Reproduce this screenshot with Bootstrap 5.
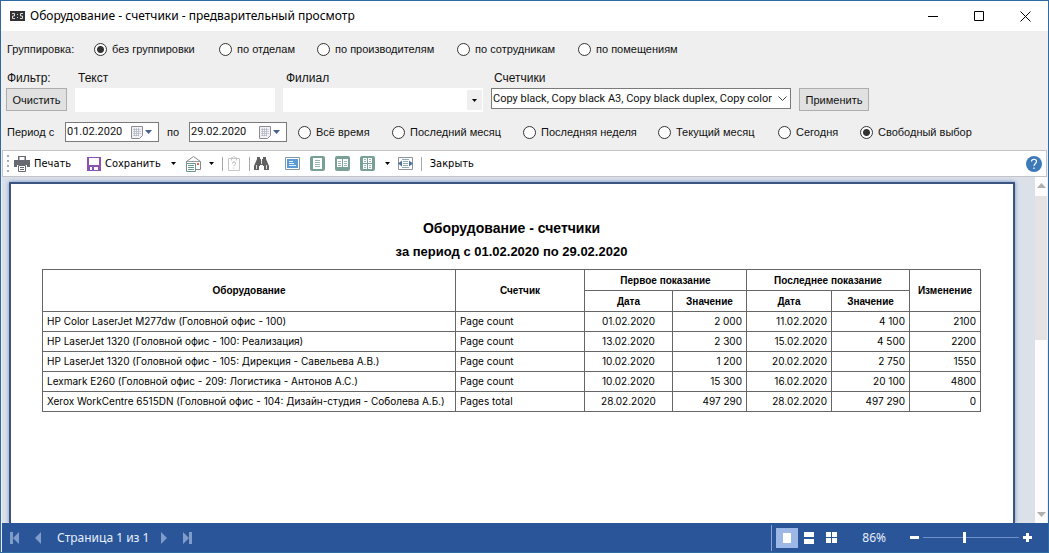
<!DOCTYPE html>
<html lang="ru">
<head>
<meta charset="utf-8">
<meta name="viewport" content="width=device-width, initial-scale=1">
<title>Оборудование - счетчики - предварительный просмотр</title>
<link rel="stylesheet" href="https://cdn.jsdelivr.net/npm/bootstrap@5.3.0/dist/css/bootstrap.min.css">
<style>
body { font-family: "Liberation Sans", Arial, sans-serif; font-size: 11px; line-height: 16px; color: #111; background: #efefef; }
svg { display: block; flex-shrink: 0; }
.app-window { border: 1px solid #2f6aa3; }
.titlebar { height: 30px; padding-left: 8px; background: #fff; font: 12px/18px "Noto Sans", sans-serif; color: #000; }
.win-btn { width: 46px; height: 30px; padding: 0; border: 0; background: none; color: #000; }
.form-area { padding: 0 4px 0 5px; height: 119px; }
.pick-grid { display: grid; align-items: center; height: 36px; padding-left: 1px; }
.pick-group { grid-template-columns: 87px 125px 98px 140px 121px 140px; }
.pick-period { grid-template-columns: 58px 94px 30px 98px 11px 94px 131px 135px 120px 82px 120px; height: 40px; }
.filter-grid { display: grid; grid-template-columns: 61px 200px 200px 300px 70px; column-gap: 8px; align-items: start; }
.filter-grid .cap { font-size: 12px; height: 21px; padding: 3px 0 0 3px; }
.filter-grid .cap-first { padding-left: 1px; }
.pick { display: flex; align-items: center; gap: 5px; white-space: nowrap; cursor: pointer; }
.pick .form-check-input { float: none; margin: 0; width: 13px; height: 13px; border: 1px solid #333; background: #fff; flex-shrink: 0; box-shadow: none; }
.pick .form-check-input:checked { background: radial-gradient(circle, #333 0 3px, #fff 4px); }
.btn-classic { height: 23px; padding: 0; font-size: 11px; line-height: 20px; border: 1px solid #adadad; border-radius: 0; background: #e1e1e1; color: #111; }
.field-flat, .field-line { background-image: none; border-radius: 0; }
.field-flat { height: 24px; padding: 0 4px; border: 0; background-color: #fff; font-size: 12px; }
.field-line { height: 21px; padding: 0 18px 0 1px; border: 1px solid #7a7a7a; background-color: #fff; font: 11px/18px Roboto, sans-serif; color: #111; }
.pick-arrow { position: absolute; right: 1px; top: 2px; height: 20px; width: 15px; background: #efefef; display: flex; align-items: center; justify-content: center; pointer-events: none; }
.pick-chevron { position: absolute; right: 4px; top: 8px; pointer-events: none; }
.date-box { display: flex; height: 20px; border: 1px solid #7a7a7a; background: #fff; }
.date-box input { width: 64px; flex: 1; min-width: 0; border: 0; padding: 0 0 0 1px; font: 11px/16px Roboto, sans-serif; color: #111; outline: 0; }
.date-box button, .tool, .pager button, .zoomer button { border: 0; background: none; padding: 0; color: inherit; display: flex; align-items: center; }
.date-box button { padding-right: 6px; gap: 2px; }
.toolstrip { margin: 0 1px; height: 27px; border: 1px solid #c3c3c8; background: #fff; color: #000; font: 11px/16px "DejaVu Sans Condensed", "DejaVu Sans", sans-serif; }
.tool { gap: 4px; white-space: nowrap; }
.gap-10 { margin-left: 10px; }
.tool-sep { width: 1px; height: 14px; background: #a8a8a8; }
.viewer { min-height: 0; margin: 0 1px; background: #dbe0e9; }
.sheet-wrap { padding: 5px 20px 0 7px; overflow: hidden; }
.sheet { border: 2px solid #3b5580; border-bottom: 0; background: #fff; box-shadow: 0 0 4px #6f8fc6; padding: 32px 32px 0 31px; color: #000; }
.sheet h1 { font-size: 14px; line-height: 24px; font-weight: 700; margin: 0; }
.sheet h2 { font-size: 13px; line-height: 24px; font-weight: 700; margin: 0 0 5px; }
.report { width: 100%; table-layout: fixed; border-collapse: collapse; font-size: 10px; line-height: 12px; }
.report th, .report td { border: 1px solid #666; padding: 4px 4px 3px; height: 20px; white-space: nowrap; }
.report th { height: 21px; text-align: center; font-weight: 700; }
.report td { font-family: Inter, "Liberation Sans", sans-serif; padding: 3px 4px 4px; }
.c-name { width: auto; } .c-kind { width: 129px; } .c-date { width: 88px; } .c-val { width: 74px; } .c-date2 { width: 85px; } .c-val2 { width: 78px; } .c-diff { width: 71px; }
.scrollcol { width: 16px; background: #fcfcfc; padding: 6px 0; }
.thumb { width: 12px; height: 144px; background: #e3e3e3; margin-top: 8px; }
.statusbar { height: 29px; background: #2a5699; color: #e8eefa; font: 12px/18px "Noto Sans", sans-serif; margin-left: 1px; }
.pager { gap: 16px; }
.pager span { margin-right: -4px; }
.zoomer .view-on { background: #9db8e6; }
.zoomer .view { width: 22px; height: 20px; justify-content: center; }
.zoom-value { margin: 0 24px 0 20px; }
.zoomer input { appearance: none; width: 96px; height: 14px; margin: 0 4px; background: linear-gradient(#6f90c8, #6f90c8) center / 100% 1px no-repeat; }
.zoomer input::-webkit-slider-thumb { appearance: none; width: 3px; height: 11px; background: #fff; }
</style>
</head>
<body>
<div class="app-window d-flex flex-column vh-100">
  <header class="titlebar d-flex align-items-center">
    <svg class="me-1" width="17" height="10" viewBox="0 0 17 10" aria-hidden="true"><path d="M1 0h15v10H1z" fill="#333"/><path d="M3 2.500h2.500V5H3.500v2.500H6M8 3.500h1M8 6.500h1M14 2.500h-2.500V5h2v2.500H11" fill="none" stroke="#ddd"/></svg>
    <span class="flex-grow-1">Оборудование - счетчики - предварительный просмотр</span>
    <button class="win-btn" aria-label="Свернуть"><svg class="mx-auto" width="11" height="11"><path d="M0 5.500h10" stroke="#000"/></svg></button>
    <button class="win-btn" aria-label="Развернуть"><svg class="mx-auto" width="11" height="11"><path d="M.5.5h9v9h-9z" fill="none" stroke="#000"/></svg></button>
    <button class="win-btn" aria-label="Закрыть окно"><svg class="mx-auto" width="11" height="11"><path d="M.5.5l10 10M10.500.5l-10 10" stroke="#000"/></svg></button>
  </header>

  <form class="form-area" onsubmit="return false">
    <div class="pick-grid pick-group">
      <span>Группировка:</span>
      <label class="pick"><input class="form-check-input" type="radio" name="grp" checked>без группировки</label>
      <label class="pick"><input class="form-check-input" type="radio" name="grp">по отделам</label>
      <label class="pick"><input class="form-check-input" type="radio" name="grp">по производителям</label>
      <label class="pick"><input class="form-check-input" type="radio" name="grp">по сотрудникам</label>
      <label class="pick"><input class="form-check-input" type="radio" name="grp">по помещениям</label>
    </div>
    <div class="filter-grid">
      <span class="cap cap-first">Фильтр:</span>
      <label class="cap" for="txt">Текст</label>
      <label class="cap" for="branch">Филиал</label>
      <label class="cap" for="counters">Счетчики</label>
      <span class="cap"></span>
      <button class="btn btn-classic" type="button">Очистить</button>
      <input class="form-control field-flat" id="txt" type="text">
      <div class="position-relative">
        <select class="form-select field-flat" id="branch"><option></option></select>
        <span class="pick-arrow"><svg width="5" height="3"><path d="M0 0h5L2.500 3z"/></svg></span>
      </div>
      <div class="position-relative">
        <select class="form-select field-line" id="counters"><option>Copy black, Copy black A3, Copy black duplex, Copy color</option></select>
        <svg class="pick-chevron" width="9" height="6"><path d="M.5.5l4 4 4-4" fill="none" stroke="#444"/></svg>
      </div>
      <button class="btn btn-classic" type="button">Применить</button>
    </div>
    <div class="pick-grid pick-period">
      <label for="d1">Период с</label>
      <div class="date-box"><input id="d1" type="text" value="01.02.2020"><button type="button" aria-label="Календарь"><svg width="12" height="13"><use href="#i-cal"/></svg><svg width="7" height="4"><path d="M0 0h7L3.500 4z" fill="#44618f"/></svg></button></div>
      <label class="ps-2" for="d2">по</label>
      <div class="date-box"><input id="d2" type="text" value="29.02.2020"><button type="button" aria-label="Календарь"><svg width="12" height="13"><use href="#i-cal"/></svg><svg width="7" height="4"><path d="M0 0h7L3.500 4z" fill="#44618f"/></svg></button></div>
      <span></span>
      <label class="pick"><input class="form-check-input" type="radio" name="per">Всё время</label>
      <label class="pick"><input class="form-check-input" type="radio" name="per">Последний месяц</label>
      <label class="pick"><input class="form-check-input" type="radio" name="per">Последняя неделя</label>
      <label class="pick"><input class="form-check-input" type="radio" name="per">Текущий месяц</label>
      <label class="pick"><input class="form-check-input" type="radio" name="per">Сегодня</label>
      <label class="pick"><input class="form-check-input" type="radio" name="per" checked>Свободный выбор</label>
    </div>
  </form>

  <div class="toolstrip d-flex align-items-center ps-1 pe-1">
    <svg width="3" height="18"><path d="M0 0h2v2H0zM0 5h2v2H0zM0 10h2v2H0zM0 15h2v2H0z" fill="#aaa"/></svg>
    <button class="tool ms-1"><svg width="16" height="16"><path d="M4 0h8v4h4v7h-3V9H3v2H0V4h4z" fill="#666a70"/><path d="M5.500 1v3h5V1" fill="#fff"/><path d="M4.500 9.500h7v6h-7z" fill="#fff" stroke="#666a70"/><path d="M6 11.500h4M6 13.500h4" stroke="#666a70"/></svg>Печать</button>
    <button class="tool ms-3"><svg width="14" height="14"><path d="M0 0h14v14H0z" fill="#8e52b0"/><path d="M2 1h10v7H2zM3 10h8v3H3z" fill="#fff"/><path d="M5 10h2v3H5z" fill="#8e52b0"/></svg>Сохранить</button>
    <button class="tool gap-10" aria-label="Варианты сохранения"><svg width="5" height="3"><path d="M0 0h5L2.500 3z"/></svg></button>
    <button class="tool gap-10" aria-label="Отправить"><svg width="15" height="16"><path d="M.5 15V5.500l7-5 7 5v8h-5" fill="#fff" stroke="#888"/><path d="M.5 5.500h14" stroke="#999"/><path d="M.5 7.500h9v8h-9z" fill="#fff" stroke="#6b9690"/><path d="M2 9.500h6M2 11.500h6M2 13.500h6" stroke="#6b9690"/><path d="M11 7h2v2h-2z" fill="#d66c45"/></svg></button>
    <button class="tool ms-2" aria-label="Варианты отправки"><svg width="5" height="3"><path d="M0 0h5L2.500 3z"/></svg></button>
    <span class="tool-sep ms-2"></span>
    <button class="tool ms-1" aria-label="Параметры" disabled><svg width="14" height="15"><path d="M1.500 2.500h11v12h-11zM4.500 4.500v-3h1l1.500-1 1.500 1h1v3" fill="#fff" stroke="#c6c6c6"/><path d="M5.500 7.500c0-2 3-2 3 0 0 1.300-1.500 1-1.500 2.500M7 11.500v1" fill="none" stroke="#aaa"/></svg></button>
    <span class="tool-sep ms-2"></span>
    <button class="tool ms-1" aria-label="Найти"><svg width="15" height="14"><path d="M3 0h3v2h1v2h1V2h1V0h3v2l3 7v4h-5V9H9V8H6v1H5v4H0V9l3-7z" fill="#606060"/><path d="M2.500 8v4M12.500 8v4M7.500 4v3" stroke="#ddd"/></svg></button>
    <button class="tool ms-3" aria-label="Экран"><svg width="15" height="13"><path d="M.5.5h14v12H.5z" fill="#fff" stroke="#8198a8"/><path d="M2 2h11v9H2z" fill="#5b9bd5"/><path d="M4 4.500h4M4 6.500h5M4 8.500h7" stroke="#e4f0fb"/></svg></button>
    <button class="tool gap-10" aria-label="Одна страница"><svg width="15" height="15"><rect width="15" height="15" rx="2" fill="#78a096"/><path d="M3 2h9v11H3z" fill="#fff"/><path d="M5 4.500h5M5 6.500h5M5 8.500h5M5 10.500h5" stroke="#9ab5ae"/></svg></button>
    <button class="tool gap-10" aria-label="Две страницы"><svg width="15" height="15"><rect width="15" height="15" rx="2" fill="#78a096"/><path d="M2 3h5v8H2zM8 3h5v8H8z" fill="#fff"/><path d="M3 5.500h3M3 7.500h3M3 9.500h3M9 5.500h3M9 7.500h3M9 9.500h3" stroke="#9ab5ae"/></svg></button>
    <button class="tool gap-10" aria-label="Несколько страниц"><svg width="15" height="15"><rect width="15" height="15" rx="2" fill="#78a096"/><path d="M3 2h4v5H3zM8 2h4v5H8zM3 8h4v5H3zM8 8h4v5H8z" fill="#fff"/><path d="M4 3.500h2M4 5.500h2M9 3.500h2M9 5.500h2M4 9.500h2M4 11.500h2M9 9.500h2M9 11.500h2" stroke="#9ab5ae"/></svg></button>
    <button class="tool gap-10" aria-label="Число страниц"><svg width="5" height="3"><path d="M0 0h5L2.500 3z"/></svg></button>
    <button class="tool ms-2" aria-label="По ширине"><svg width="15" height="13"><path d="M.5.5h14v12H.5z" fill="#fff" stroke="#8c949c"/><path d="M4 2.500h7M5 4.500h5M5 6.500h5M5 8.500h5M4 10.500h7" stroke="#8fa9b5"/><path d="M0 6.500l4-3v6zM15 6.500l-4-3v6z" fill="#4c7397"/></svg></button>
    <span class="tool-sep ms-2"></span>
    <button class="tool ms-2">Закрыть</button>
    <button class="tool ms-auto" aria-label="Справка"><svg width="16" height="16"><circle cx="8" cy="8" r="8" fill="#3f7ab8"/><path d="M5.500 5.500c0-3 5-3 5 0 0 2-2.500 2-2.500 4.500M8 11.500v1.500" fill="none" stroke="#fff" stroke-width="1.200"/></svg></button>
  </div>

  <main class="viewer d-flex flex-grow-1">
    <div class="sheet-wrap d-flex flex-grow-1">
      <article class="sheet flex-grow-1">
        <h1 class="text-center">Оборудование - счетчики</h1>
        <h2 class="text-center">за период с 01.02.2020 по 29.02.2020</h2>
        <table class="report">
          <colgroup><col class="c-name"><col class="c-kind"><col class="c-date"><col class="c-val"><col class="c-date2"><col class="c-val2"><col class="c-diff"></colgroup>
          <thead>
            <tr><th rowspan="2">Оборудование</th><th rowspan="2">Счетчик</th><th colspan="2">Первое показание</th><th colspan="2">Последнее показание</th><th rowspan="2">Изменение</th></tr>
            <tr><th>Дата</th><th>Значение</th><th>Дата</th><th>Значение</th></tr>
          </thead>
          <tbody>
            <tr><td>HP Color LaserJet M277dw (Головной офис - 100)</td><td>Page count</td><td class="text-center">01.02.2020</td><td class="text-end">2 000</td><td class="text-end">11.02.2020</td><td class="text-end">4 100</td><td class="text-end">2100</td></tr>
            <tr><td>HP LaserJet 1320 (Головной офис - 100: Реализация)</td><td>Page count</td><td class="text-center">13.02.2020</td><td class="text-end">2 300</td><td class="text-end">15.02.2020</td><td class="text-end">4 500</td><td class="text-end">2200</td></tr>
            <tr><td>HP LaserJet 1320 (Головной офис - 105: Дирекция - Савельева А.В.)</td><td>Page count</td><td class="text-center">10.02.2020</td><td class="text-end">1 200</td><td class="text-end">20.02.2020</td><td class="text-end">2 750</td><td class="text-end">1550</td></tr>
            <tr><td>Lexmark E260 (Головной офис - 209: Логистика - Антонов А.С.)</td><td>Page count</td><td class="text-center">10.02.2020</td><td class="text-end">15 300</td><td class="text-end">16.02.2020</td><td class="text-end">20 100</td><td class="text-end">4800</td></tr>
            <tr><td>Xerox WorkCentre 6515DN (Головной офис - 104: Дизайн-студия - Соболева А.Б.)</td><td>Pages total</td><td class="text-center">28.02.2020</td><td class="text-end">497 290</td><td class="text-end">28.02.2020</td><td class="text-end">497 290</td><td class="text-end">0</td></tr>
          </tbody>
        </table>
      </article>
    </div>
    <div class="scrollcol d-flex flex-column align-items-center">
      <svg width="9" height="5"><path d="M0 5h9L4.500 0z" fill="#b0b0b0"/></svg>
      <div class="thumb"></div>
      <svg class="mt-auto" width="9" height="5"><path d="M0 0h9L4.500 5z" fill="#b0b0b0"/></svg>
    </div>
  </main>

  <footer class="statusbar d-flex align-items-center justify-content-between">
    <div class="pager d-flex align-items-center ps-2">
      <button aria-label="Первая страница"><svg width="9" height="12"><path d="M0 0h3v12H0zM9 0v12L3 6z" fill="#7f9ccb"/></svg></button>
      <button aria-label="Предыдущая страница"><svg width="6" height="12"><path d="M6 0v12L0 6z" fill="#7f9ccb"/></svg></button>
      <span>Страница 1 из 1</span>
      <button aria-label="Следующая страница"><svg width="6" height="12"><path d="M0 0v12l6-6z" fill="#7f9ccb"/></svg></button>
      <button aria-label="Последняя страница"><svg width="9" height="12"><path d="M6 0h3v12H6zM0 0v12l6-6z" fill="#7f9ccb"/></svg></button>
    </div>
    <div class="zoomer d-flex align-items-center pe-3">
      <svg class="me-1" width="1" height="26"><path d="M.5 0v26" stroke="#8aa5d4"/></svg>
      <button class="view view-on" aria-label="Страница"><svg width="8" height="10"><path d="M0 0h8v10H0z" fill="#fff"/></svg></button>
      <button class="view" aria-label="Непрерывно"><svg width="10" height="12"><path d="M0 0h10v5H0zM0 7h10v5H0z" fill="#fff"/></svg></button>
      <button class="view" aria-label="Сетка"><svg width="11" height="11"><path d="M0 0h5v5H0zM6 0h5v5H6zM0 6h5v5H0zM6 6h5v5H6z" fill="#fff"/></svg></button>
      <span class="zoom-value">86%</span>
      <button aria-label="Уменьшить"><svg width="9" height="9"><path d="M0 3h9v3H0z" fill="#fff"/></svg></button>
      <input type="range" min="0" max="100" value="43" aria-label="Масштаб">
      <button aria-label="Увеличить"><svg width="9" height="9"><path d="M3 0h3v3h3v3H6v3H3V6H0V3h3z" fill="#fff"/></svg></button>
    </div>
  </footer>
</div>
<svg width="0" height="0" class="position-absolute"><symbol id="i-cal" viewBox="0 0 12 13"><path d="M.5.5h11v9l-3 3h-8z" fill="#f2f2f5" stroke="#8c8c94"/><path d="M2 3.500h8M2 5.500h8M2 7.500h8M2 9.500h6M3.500 2v8M5.500 2v8M7.500 2v8" stroke="#a8adbb" stroke-width=".6"/></symbol></svg>
<script src="https://cdn.jsdelivr.net/npm/bootstrap@5.3.0/dist/js/bootstrap.bundle.min.js"></script>
</body>
</html>
